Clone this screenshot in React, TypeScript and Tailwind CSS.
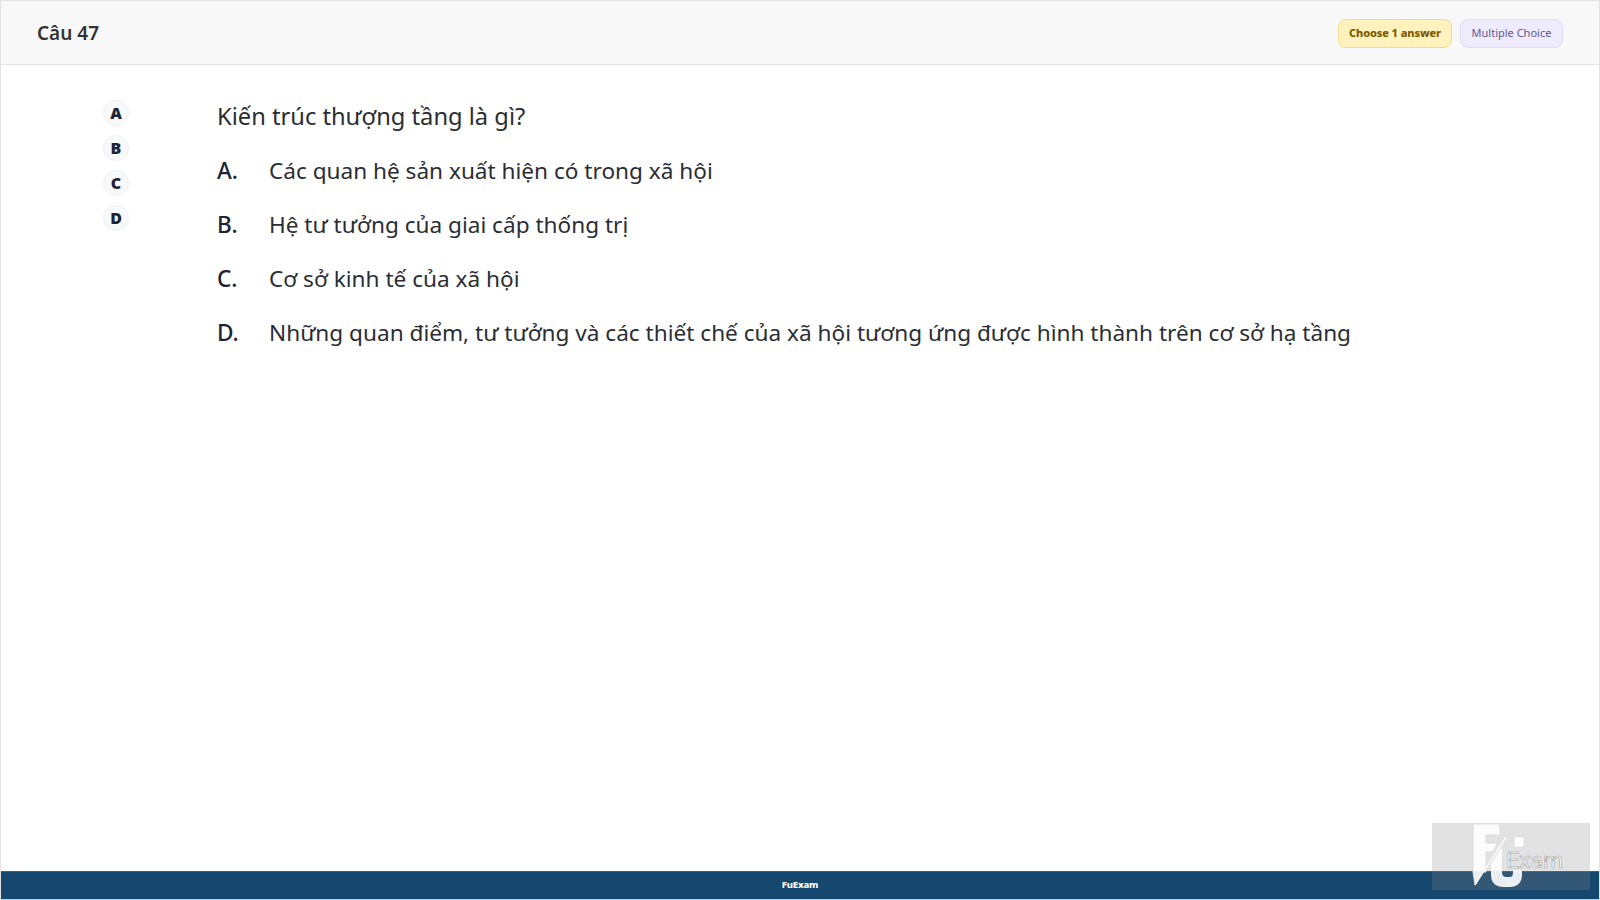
const options = [
  { label: "A.", text: "Các quan hệ sản xuất hiện có trong xã hội" },
  { label: "B.", text: "Hệ tư tưởng của giai cấp thống trị" },
  { label: "C.", text: "Cơ sở kinh tế của xã hội" },
  { label: "D.", text: "Những quan điểm, tư tưởng và các thiết chế của xã hội tương ứng được hình thành trên cơ sở hạ tầng" },
];

const Watermark = () => (
  <div className="absolute left-[1431px] top-[822px] h-[67px] w-[158px] bg-[#8a8a8a]/25">
    <svg width="158" height="67" viewBox="0 0 158 67" fill="none">
      {/* F */}
      <path d="M41 1H68V12H54V20H66L60 29H54V49H51L43 62L41 49Z" fill="#fff" fillOpacity="0.9" stroke="#dcdcdc" />
      {/* slash */}
      <path d="M43 62L74 14" stroke="#fff" strokeWidth="1.3" />
      {/* U */}
      <path d="M66 30L70 24V49C70 53 72 54 75 54H77C80 54 81 53 81 49V47H90V52C90 60 85 64 78 64H72C64 64 59 60 59 52V41Z" fill="#fff" fillOpacity="0.9" />
      {/* dot */}
      <rect x="82" y="14" width="10" height="10" fill="#fff" fillOpacity="0.92" stroke="#d8d8d8" strokeWidth="0.5" />
      <text x="74" y="45" textLength="57" lengthAdjust="spacingAndGlyphs" fill="#fbfbfb" stroke="#a6a6a6" strokeWidth="0.6" fontSize="22" fontFamily="Roboto, sans-serif">Exam</text>
    </svg>
  </div>
);

export default function App() {
  return (
    <div className="relative flex h-[900px] w-[1600px] flex-col border-x border-t border-[#e2e2e2] bg-white font-['Noto_Sans',sans-serif] text-[#2a2e33]">
      <header className="flex h-[64px] shrink-0 items-center justify-between border-b border-[#e3e3e3] bg-[#f8f8f8] px-[36px] pt-[1px]">
        <h1 className="text-[19px] font-semibold text-[#333]">Câu 47</h1>
        <div className="flex items-center gap-2">
          <span className="flex h-[29px] w-[114px] items-center justify-center rounded-lg border border-[#f4dc8e] bg-[#fff2bd] text-[11px] font-extrabold tracking-[-0.1px] text-[#7d5a00]">Choose 1 answer</span>
          <span className="flex h-[29px] w-[103px] items-center justify-center rounded-lg border border-[#e0dcf8] bg-[#eeebfd] text-[11px] text-[#5f5a8f]">Multiple Choice</span>
        </div>
      </header>

      <main className="flex flex-1 pl-[102px] pt-[32px]">
        <div className="flex w-[114px] shrink-0 flex-col gap-[9px] pt-[2.5px]">
          {["A", "B", "C", "D"].map((letter) => (
            <div key={letter} className="flex h-[26px] w-[26px] items-center justify-center rounded-full border border-[#edf0f3] bg-[#f8f9fb] text-[16px] font-black text-[#1c2438]">
              {letter}
            </div>
          ))}
        </div>
        <div>
          <p className="text-[23.7px] leading-[38px]">Kiến trúc thượng tầng là gì?</p>
          <ul className="mt-[17px] flex flex-col gap-[16px]">
            {options.map((o) => (
              <li key={o.label} className="flex text-[22.6px] leading-[38px]">
                <span className="w-[52px] shrink-0 font-[550] text-[#1c2438]">{o.label}</span>
                <span>{o.text}</span>
              </li>
            ))}
          </ul>
        </div>
      </main>

      <footer className="flex h-[29px] shrink-0 items-center justify-center border-t border-b border-t-[#33607f] border-b-[#a9dcf2] bg-[#16476f] text-[9.5px] font-extrabold tracking-[-0.2px] text-white">
        FuExam
      </footer>
      <Watermark />
    </div>
  );
}
